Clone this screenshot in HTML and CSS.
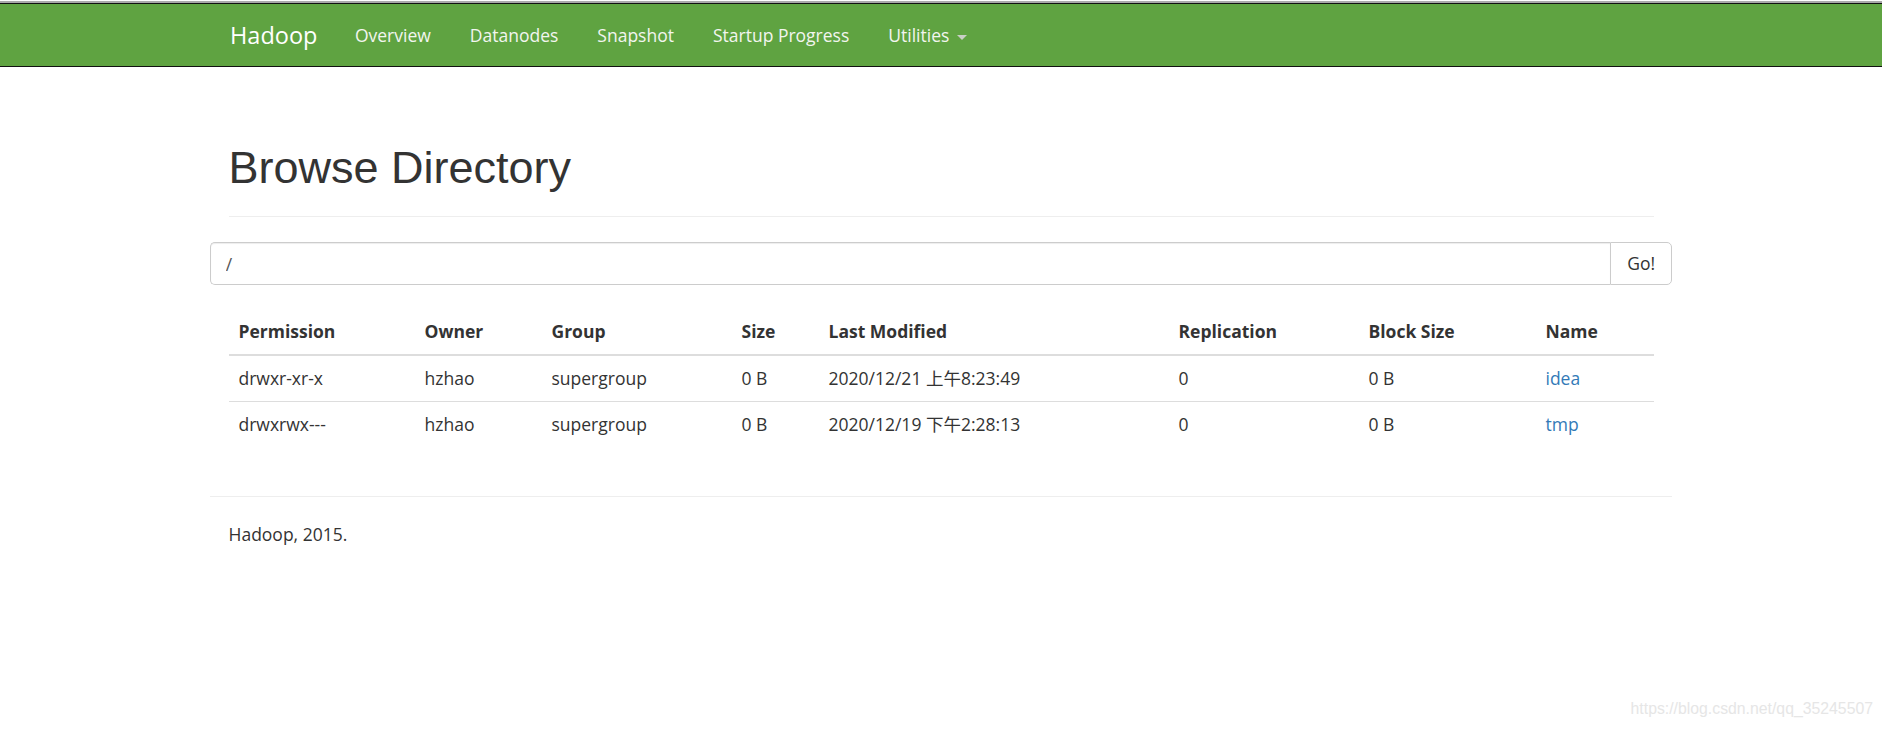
FILE: index.html
```html
<!DOCTYPE html>
<html>
<head>
<meta charset="utf-8">
<title>Browsing HDFS</title>
<link rel="stylesheet" href="styles.css">
</head>
<body>
<div class="chrome-top"></div>
<header class="navbar">
  <div class="container nav-inner">
    <a class="brand" href="#">Hadoop</a>
    <ul class="nav">
      <li><a href="#">Overview</a></li>
      <li><a href="#">Datanodes</a></li>
      <li><a href="#">Snapshot</a></li>
      <li><a href="#">Startup Progress</a></li>
      <li><a href="#">Utilities <span class="caret"></span></a></li>
    </ul>
  </div>
</header>
<main class="container">
  <div class="page-header"><h1>Browse Directory</h1></div>
  <form class="input-group">
    <input class="form-control" type="text" value="/">
    <button class="btn" type="button">Go!</button>
  </form>
  <table class="table">
    <colgroup>
      <col class="c-perm"><col class="c-owner"><col class="c-group"><col class="c-size">
      <col class="c-mod"><col class="c-repl"><col class="c-bsize"><col class="c-name">
    </colgroup>
    <thead>
      <tr><th>Permission</th><th>Owner</th><th>Group</th><th>Size</th><th>Last Modified</th><th>Replication</th><th>Block Size</th><th>Name</th></tr>
    </thead>
    <tbody>
      <tr><td>drwxr-xr-x</td><td>hzhao</td><td>supergroup</td><td>0 B</td><td>2020/12/21 上午8:23:49</td><td>0</td><td>0 B</td><td><a href="#">idea</a></td></tr>
      <tr><td>drwxrwx---</td><td>hzhao</td><td>supergroup</td><td>0 B</td><td>2020/12/19 下午2:28:13</td><td>0</td><td>0 B</td><td><a href="#">tmp</a></td></tr>
    </tbody>
  </table>
  <hr class="rule">
  <footer class="footer"><p>Hadoop, 2015.</p></footer>
</main>
<div class="watermark">https://blog.csdn.net/qq_35245507</div>
</body>
</html>
```
FILE: styles.css
```css
* { box-sizing: border-box; }
html, body { margin: 0; padding: 0; }
body {
  font-family: "Open Sans", "Noto Sans CJK SC", sans-serif;
  font-size: 17.5px;
  line-height: 25px;
  color: #333;
  background: #fff;
  position: relative;
  min-height: 730px;
}
.chrome-top {
  height: 3px;
  border-top: 1px solid #fff;
  background: #a9a9a9;
}
.navbar {
  background: #5fa341;
  border-top: 1px solid #111;
  border-bottom: 1px solid #111;
  height: 64px;
  margin-bottom: 25px;
}
.container {
  width: 1462.5px;
  margin: 0 auto;
  padding: 0 18.75px;
}
.nav-inner {
  display: flex;
  align-items: center;
  height: 62px;
}
.brand {
  font-size: 23.5px;
  color: #fff;
  text-decoration: none;
  padding: 0 18px 0 1.5px;
}
.nav {
  display: flex;
  list-style: none;
  margin: 0;
  padding: 0;
}
.nav a {
  display: block;
  color: #f2f5ef;
  text-decoration: none;
  padding: 0 19.5px;
  line-height: 62px;
}
.caret {
  display: inline-block;
  width: 0;
  height: 0;
  margin-left: 3px;
  vertical-align: middle;
  border-top: 5px solid #c9cfc6;
  border-left: 5px solid transparent;
  border-right: 5px solid transparent;
}
.page-header {
  margin: 76px 0 25px;
  padding-bottom: 11.25px;
  border-bottom: 1.25px solid #eee;
}
.page-header h1 {
  margin: 0 0 12.5px;
  font-family: "Liberation Sans", Arial, sans-serif;
  font-size: 45px;
  font-weight: 500;
  line-height: 49.5px;
  color: #333;
}
.input-group {
  display: flex;
  margin: 0 -18.75px 24px;
  height: 42.5px;
}
.form-control {
  flex: 1;
  height: 42.5px;
  padding: 7.5px 15px;
  font: inherit;
  color: #555;
  border: 1.25px solid #ccc;
  border-right: 0;
  border-radius: 5px 0 0 5px;
  box-shadow: inset 0 1px 1px rgba(0,0,0,.075);
  outline: none;
}
.btn {
  width: 62px;
  height: 42.5px;
  font: inherit;
  color: #333;
  background: #fff;
  border: 1.25px solid #ccc;
  border-radius: 0 5px 5px 0;
  padding: 0;
}
.table {
  width: 100%;
  table-layout: fixed;
  border-collapse: collapse;
  margin-bottom: 49px;
}
.c-perm { width: 186px; }
.c-owner { width: 127px; }
.c-group { width: 190px; }
.c-size { width: 87px; }
.c-mod { width: 350px; }
.c-repl { width: 190px; }
.c-bsize { width: 177px; }
.c-name { width: 118px; }
.table th, .table td {
  text-align: left;
  padding: 10px;
  line-height: 25px;
  white-space: nowrap;
}
.table th {
  font-weight: 700;
  border-bottom: 2.5px solid #ddd;
}
.table td { border-top: 1.25px solid #ddd; }
.table a { color: #337ab7; text-decoration: none; }
.rule {
  margin: 20px -18.75px 25px;
  border: 0;
  border-top: 1.25px solid #eee;
}
.footer p { margin: 0; }
.watermark {
  position: absolute;
  right: 9px;
  bottom: 9px;
  font-family: "Liberation Sans", Arial, sans-serif;
  font-size: 15.8px;
  color: #e6e6e6;
}
```
